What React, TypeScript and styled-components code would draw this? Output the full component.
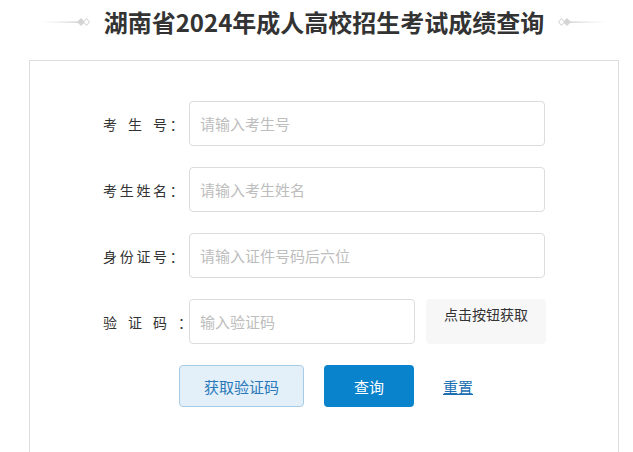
import styled, { createGlobalStyle } from 'styled-components';

const GlobalStyle = createGlobalStyle`
  body {
    margin: 0;
    background: #fff;
    font-family: "Noto Sans CJK SC", "Liberation Sans", sans-serif;
    color: #333;
  }
`

const fields = [
  { label: '考 生 号：', placeholder: '请输入考生号' },
  { label: '考生姓名：', placeholder: '请输入考生姓名' },
  { label: '身份证号：', placeholder: '请输入证件号码后六位' },
];

const Ornament = ({ flip }: { flip?: boolean }) => (
  <OrnamentSvg width="50" height="10" viewBox="0 0 50 10" $flip={flip}>
    <defs>
      <linearGradient id={flip ? 'ornR' : 'ornL'} x1="0" x2="1" y1="0" y2="0">
        <stop offset="0" stopColor="#ddd" stopOpacity="0" />
        <stop offset="1" stopColor="#c8c8c8" />
      </linearGradient>
    </defs>
    <rect x="0" y="4.5" width="38" height="1.2" fill={`url(#${flip ? 'ornR' : 'ornL'})`} />
    <polygon points="37,5 41,1 45,5 41,9" fill="#d4d4d4" />
    <polygon points="43.5,5 46.5,1.5 49.5,5 46.5,8.5" fill="#fff" stroke="#cfcfcf" strokeWidth="1" />
  </OrnamentSvg>
);

const App = () => {
  return (
    <Page>
      <GlobalStyle />
      <TitleBar>
        <Ornament />
        <Title>湖南省2024年成人高校招生考试成绩查询</Title>
        <Ornament flip />
      </TitleBar>
      <Card>
        <Form>
          {fields.map(f => (
            <Row key={f.label}>
              <Label>{f.label}</Label>
              <Input placeholder={f.placeholder} />
            </Row>
          ))}
          <Row>
            <Label>验 证 码 ：</Label>
            <Input $width={226} placeholder="输入验证码" />
            <CodeHint>点击按钮获取</CodeHint>
          </Row>
          <Actions>
            <GetCodeButton>获取验证码</GetCodeButton>
            <QueryButton>查询</QueryButton>
            <ResetLink href="#">重置</ResetLink>
          </Actions>
        </Form>
      </Card>
    </Page>
  );
}

const Page = styled.div`
  width: 590px;
  margin-left: 29px;
`
const TitleBar = styled.div`
  height: 44px;
  display: flex;
  align-items: center;
  justify-content: center;
  gap: 14px;
  margin-bottom: 16px;
`
const OrnamentSvg = styled.svg<{ $flip?: boolean }>`
  display: block;
  transform: ${p => (p.$flip ? 'scaleX(-1)' : 'none')};
`
const Title = styled.h1`
  margin: 0;
  font-size: 24px;
  font-weight: 700;
  color: #333;
  line-height: 44px;
  white-space: nowrap;
`
const Card = styled.div`
  border: 1px solid #ddd;
  border-bottom: none;
  min-height: 400px;
  box-sizing: border-box;
  padding: 40px 0 0 73px;
`
const Form = styled.form`
  display: flex;
  flex-direction: column;
  gap: 21px;
`
const Row = styled.div`
  display: flex;
  align-items: center;
  height: 45px;
`
const Label = styled.label`
  width: 86px;
  flex: none;
  font-size: 14px;
  letter-spacing: 2.7px;
  word-spacing: 2.5px;
  color: #333;
  white-space: pre;
`
const Input = styled.input<{ $width?: number }>`
  width: ${p => p.$width ?? 356}px;
  height: 45px;
  box-sizing: border-box;
  border: 1px solid #dcdcdc;
  border-radius: 4px;
  padding: 0 10px;
  font-size: 15px;
  font-family: inherit;
  color: #333;
  outline: none;

  &::placeholder {
    color: #bdbdbd;
  }
`
const CodeHint = styled.div`
  margin-left: 11px;
  width: 120px;
  height: 45px;
  box-sizing: border-box;
  background: #f7f7f7;
  border-radius: 4px;
  font-size: 14px;
  line-height: 30px;
  text-align: center;
  color: #333;
`
const Actions = styled.div`
  display: flex;
  align-items: center;
  margin-left: 76px;
  height: 42px;
`
const GetCodeButton = styled.button`
  width: 125px;
  height: 42px;
  box-sizing: border-box;
  background: #e3f0fa;
  border: 1px solid #a8cbe4;
  border-radius: 4px;
  color: #2a78b8;
  font-size: 15px;
  font-family: inherit;
`
const QueryButton = styled.button`
  width: 90px;
  height: 42px;
  margin-left: 20px;
  background: #0a83cd;
  border: none;
  border-radius: 4px;
  color: #fff;
  font-size: 15px;
  font-family: inherit;
`
const ResetLink = styled.a`
  margin-left: 29px;
  font-size: 15px;
  color: #1b70b4;
  text-decoration: underline;
`

export default App;
